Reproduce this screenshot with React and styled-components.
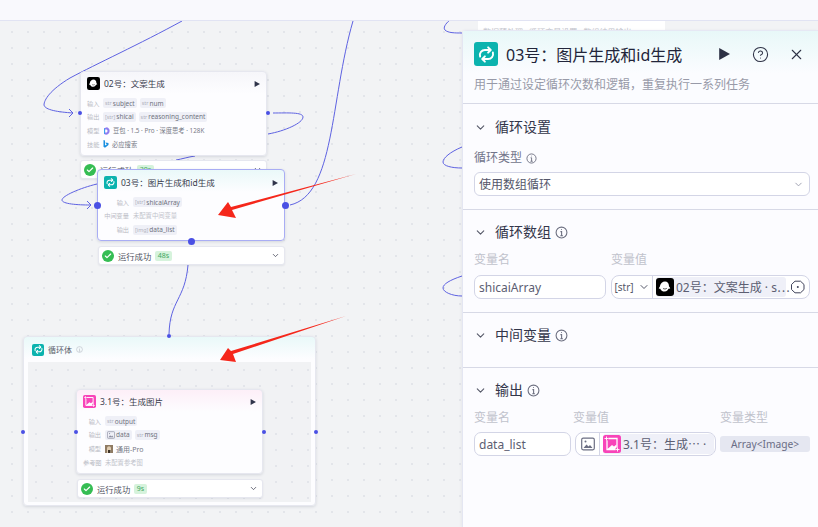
import React from "react";
import styled, { createGlobalStyle } from "styled-components";
import { ChevronDown, CircleHelp, X, Check } from "lucide-react";

const Global = createGlobalStyle`
  html, body { margin: 0; padding: 0; width: 818px; height: 527px; overflow: hidden; }
  body { font-family: "Noto Sans", "Noto Sans CJK SC", sans-serif; background: #f2f3f5; }
  * { box-sizing: border-box; }
`;
const Page = styled.div`width: 818px; height: 527px; display: flex; flex-direction: column;`;
const TopBar = styled.div`height: 21px; flex: none; background: #f9f9fd; border-bottom: 1px solid #e1e3f3;`;
const Canvas = styled.div`
  position: relative; flex: 1; overflow: hidden; background-color: #f2f3f5;
  background-image: radial-gradient(circle, #e3e5ea 0.8px, transparent 1px);
  background-size: 16px 16px; background-position: 4px 3px;
`;
const Wires = styled.svg`position: absolute; left: 0; top: 0; width: 818px; height: 506px; z-index: ${p => p.$z};`;
const Glyph = styled.svg`flex: none; display: block;`;
const Card = styled.div`
  position: absolute; left: ${p => p.$x}px; top: ${p => p.$y - 21}px; width: ${p => p.$w}px; height: ${p => p.$h}px;
  background: linear-gradient(180deg, ${p => p.$tint} 0, #fdfdff 22px);
  border-radius: 4px; z-index: ${p => p.$z || 1}; padding: ${p => (p.$active ? 6 : 5)}px 6px 0;
  border: ${p => (p.$active ? "1px solid #a9adf4" : "1px solid #e6e7ef")};
  box-shadow: 0 1px 3px rgba(30, 40, 80, 0.14);
`;
const CardHead = styled.div`display: flex; align-items: center; gap: 4px; height: 13px; margin-bottom: 7px;`;
const CardTitle = styled.div`flex: 1; font-size: 8.5px; line-height: 13px; color: #3a3d4d; white-space: nowrap;`;
const IconTile = styled.div`
  width: ${p => p.$s}px; height: ${p => p.$s}px; border-radius: ${p => p.$r || 2}px; background: ${p => p.$bg}; flex: none;
  display: flex; align-items: center; justify-content: center; color: #fff;
`;
const Rows = styled.div`display: flex; flex-direction: column; gap: 1.6px;`;
const Row = styled.div`display: flex; align-items: center; gap: 4px; height: 12.2px; white-space: nowrap;`;
const RowLabel = styled.span`width: ${p => p.$w}px; flex: none; text-align: right; font-size: 6.2px; color: #b9bbc4;`;
const Chip = styled.span`
  display: inline-flex; align-items: center; gap: 1px; height: 10px; padding: 0 2px; border-radius: 2px;
  background: #eff0f7; font-size: 6.5px; color: #70737f; margin-right: -1px;
`;
const ChipType = styled.span`color: #b1b3bf; font-size: 5.4px;`;
const Plain = styled.span`font-size: 6.3px; color: ${p => p.$muted ? "#c1c3cb" : "#777a86"}; display: inline-flex; align-items: center; gap: 3px;`;
const ModelName = styled(Plain)`font-size: 7px;`;
const Status = styled.div`
  position: absolute; left: ${p => p.$x}px; top: ${p => p.$y - 21}px; width: ${p => p.$w}px; height: 19px;
  background: #fff; border: 1px solid #e6e7ef; border-radius: 3px; z-index: ${p => p.$z || 1};
  display: flex; align-items: center; padding: 0 4px 0 3px; gap: 4px; box-shadow: 0 1px 2px rgba(30,40,80,.08);
`;
const StatusDot = styled.span`width: 12px; height: 12px; border-radius: 50%; background: #35bd53; color: #fff; display: flex; align-items: center; justify-content: center; flex: none;`;
const StatusText = styled.span`font-size: 8.3px; color: #50535f;`;
const Time = styled.span`font-size: 7px; height: 10px; line-height: 10px; padding: 0 2.5px; background: #d6f3dc; color: #42a860; border-radius: 2px; margin-right: auto;`;
const Handle = styled.span`
  position: absolute; left: ${p => p.$x - p.$s / 2}px; top: ${p => p.$y - 21 - p.$s / 2}px; width: ${p => p.$s}px; height: ${p => p.$s}px;
  border-radius: 50%; background: #4a50e4; z-index: 6;
`;
const Loop = styled(Card)`padding: 4px 8px;`;
const LoopBody = styled.div`
  position: absolute; left: 4px; right: 4px; top: 25px; bottom: 3px; background-color: #f1f2f4;
  background-image: radial-gradient(circle, #e3e5ea 0.8px, transparent 1px); background-size: 16px 16px;
`;
const LoopHead = styled.div`display: flex; align-items: center; gap: 4px; height: 13px; margin-top: 2px;`;
const LoopTitle = styled.span`font-size: 8px; color: #5b5e6c;`;
const BgNode = styled.div`
  position: absolute; left: 478px; top: -1px; width: 187px; height: 60px; background: #fff; z-index: 1;
  font-size: 8px; line-height: 24px; padding-left: 5px; color: #c5c6ce; white-space: nowrap;
`;

const Panel = styled.aside`
  position: absolute; left: 462px; top: 9px; width: 356px; height: 497px; z-index: 10;
  background: #fcfcff; border-left: 1px solid #e4e6f2; border-top: 1px solid #e6e8f4; border-top-left-radius: 5px;
  box-shadow: -1px 0 3px rgba(30, 40, 80, 0.05);
`;
const PanelHead = styled.header`
  height: 73px; padding: 11px 11px 0 11px; border-bottom: 1px solid #d7d9e6;
  background: linear-gradient(180deg, #e8f8f8 0, #fbfcff 42px);
`;
const PanelTop = styled.div`display: flex; align-items: center; height: 24px;`;
const PanelTitle = styled.h1`flex: 1; margin: 1px 0 0 8px; font-size: 16px; font-weight: 400; color: #22253a; line-height: 24px; white-space: nowrap;`;
const HeadActions = styled.div`display: flex; align-items: center; gap: 19px; color: #2d3145; margin-right: 2px;`;
const HeadPlay = styled.span`display: flex; margin-right: 3px;`;
const PanelDesc = styled.p`margin: 10px 0 0; font-size: 12px; line-height: 18px; color: #989aa8; white-space: nowrap;`;
const Section = styled.section`
  height: ${p => p.$h}px; padding: ${p => p.$pt}px 8px 0 11px; border-bottom: ${p => p.$last ? "none" : "1px solid #d7d9e6"};
`;
const SectionHead = styled.div`display: flex; align-items: center; height: 22px; color: #555868;`;
const SectionTitle = styled.h2`margin: 0 4px 0 8px; font-size: 14px; font-weight: 400; color: #33364a; line-height: 22px; white-space: nowrap;`;
const Field = styled.div`display: flex; align-items: center; font-size: 12px; color: #72748a; line-height: 18px; gap: 4px; margin-top: ${p => p.$mt || 0}px;`;
const Select = styled.div`
  height: 24px; margin-top: 5px; border: 1px solid #d3d5e6; border-radius: 6px; background: #fff;
  display: flex; align-items: center; justify-content: space-between; padding: 0 5px 0 4px; font-size: 12px; color: #54566a;
`;
const Labels = styled.div`display: flex; font-size: 12px; line-height: 18px; color: #c0c2cc; margin-top: ${p => p.$mt}px;`;
const LabelCol = styled.span`width: ${p => p.$w}px; flex: none;`;
const InputRow = styled.div`display: flex; align-items: center; gap: ${p => p.$g}px; margin-top: ${p => p.$mt}px;`;
const TextBox = styled.div`
  width: ${p => p.$w}px; height: 24px; border: 1px solid #d3d5e6; border-radius: 7px; background: #fff; flex: none;
  display: flex; align-items: center; padding: 0 4px; font-size: 12px; color: #5c5e72;
`;
const Ref = styled.div`
  width: ${p => p.$w}px; height: 24px; border: 1px solid #d3d5e6; border-radius: 8px; background: #fff; flex: none;
  display: flex; align-items: center; overflow: hidden;
`;
const RefType = styled.div`
  width: ${p => p.$w}px; height: 100%; flex: none; border-right: 1px solid #d3d5e6; display: flex; align-items: center; justify-content: center; gap: 4px;
  color: #555869; font-size: 10px;
`;
const RefChip = styled.div`
  flex: 1; min-width: 0; height: 20px; margin: 0 1px 0 3px; background: #eff0f8; border-radius: 3px;
  display: flex; align-items: center; gap: 2px; font-size: 12px; color: #5c5e72; white-space: nowrap;
`;
const TypeTag = styled.div`
  flex: none; width: 90px; height: 16px; border-radius: 3px; background: #e5e7f1; color: #6a6d85; font-size: 10.2px;
  display: flex; align-items: center; justify-content: center;
`;

const Info = ({ s = 11, c = "#6c6f80" }) => (
  <Glyph width={s} height={s} viewBox="0 0 12 12" fill="none" stroke={c}>
    <circle cx="6" cy="6" r="5" />
    <path d="M5 5.200h1.100V9M4.900 9h2.400" />
    <circle cx="6" cy="3.300" r=".5" fill={c} stroke="none" />
  </Glyph>
);
const Play = ({ s = 8, c = "#30344a" }) => (
  <Glyph width={s} height={s} viewBox="0 0 10 10"><path d="M1 0v10l9-5z" fill={c} /></Glyph>
);
const Ghost = ({ s }) => (
  <Glyph width={s} height={s} viewBox="0 0 18 18">
    <rect width="18" height="18" rx="3" fill="#000" />
    <path d="M9 3.400c2.500 0 3.900 1.900 3.900 4.200 0 .5.100.9.500 1.300.8.800 1 1.300.600 1.600-.5.200-1.100.100-1.500.200-.4.800-1.500 2.900-4 2.900-2 0-3.600-1.200-4.200-2.900-.5-.1-1-.1-1.400-.3-.3-.3.100-.8.700-1.500.3-.4.500-.8.500-1.300C4.600 5.300 6.500 3.400 9 3.400z" fill="#fff" />
    <path d="M7 10.300c.8.900 2.900.900 3.800 0" stroke="#444" strokeWidth=".9" fill="none" />
  </Glyph>
);
const ImgGen = ({ s }) => (
  <Glyph width={s} height={s} viewBox="0 0 18 18">
    <rect width="18" height="18" rx="2.500" fill="#f844b9" />
    <path d="M4 3.500h10v11H4z" fill="none" stroke="#fff" strokeWidth="1.300" />
    <path d="M4.500 14l4.500-4 2 1.500 2.500-2V14z" fill="#fff" />
    <path d="M3.500 1.500v4M1.500 3.500h4M14.500 12.500v4M12.500 14.500h4" stroke="#f844b9" strokeWidth="2.400" />
    <path d="M3.500 1.500v4M1.500 3.500h4M14.500 12.500v4M12.500 14.500h4" stroke="#fff" strokeWidth=".9" />
  </Glyph>
);
const Doubao = () => (
  <Glyph width="7" height="8" viewBox="0 0 7 8"><path d="M1 1.200l3-1c2 .8 2.800 2.200 2.600 4C6.400 6.300 4.800 7.600 3 7.800L1 7z" fill="#8f7cf0" /><path d="M2.200 2.500h1.500c1 .4 1.200 2.400 0 3H2.200z" fill="#fff" /><path d="M1 1.200v5.800l1-.4V1.800z" fill="#3aa3f0" /></Glyph>
);
const Bing = () => (
  <Glyph width="6" height="8" viewBox="0 0 6 8"><path d="M.500 0l1.500.5v5l2-1.200-1-.5-.6-1.400L5.500 3v2L2 7.800.500 6.800z" fill="#1a8fe0" /></Glyph>
);
const ImgType = ({ s = 8, c = "#8a8da0" }) => (
  <Glyph width={s} height={s} viewBox="0 0 14 14" fill="none"><rect x=".7" y="1.200" width="12.600" height="11.600" rx="1.500" stroke={c} strokeWidth="1.200" /><path d="M2.500 11l3-3.500 2 2L9 8l2.500 3z" fill={c} /><circle cx="4.500" cy="4.500" r="1" fill={c} /></Glyph>
);
const Portrait = () => (
  <Glyph width="8" height="8" viewBox="0 0 8 8"><rect width="8" height="8" fill="#8f7b63" /><path d="M2 8V3.500C2 2 3 1.300 4 1.300s2 .7 2 2.200V8z" fill="#e0cdb2" /><path d="M3 8V5h2.500v3z" fill="#3f3429" /></Glyph>
);
const LoopGlyph = ({ s }) => (
  <Glyph width={s} height={s} viewBox="0 0 16 16" fill="none" stroke="#fff" strokeWidth="1.800" strokeLinecap="round" strokeLinejoin="round">
    <path d="M2 10C1 6.500 3.500 3.800 6.500 3.800H11.500" />
    <path d="M9.500 1.300L12 3.800 9.500 6.300" />
    <path d="M14 6C15 9.500 12.500 12.200 9.500 12.200H4.500" />
    <path d="M6.500 9.700L4 12.200 6.500 14.700" />
  </Glyph>
);

const StatusBar = ({ x, y, w, z, time }) => (
  <Status $x={x} $y={y} $w={w} $z={z}>
    <StatusDot><Check size={8} strokeWidth={3.500} /></StatusDot>
    <StatusText>运行成功</StatusText>
    <Time>{time}</Time>
    <ChevronDown size={9} color="#3d4052" />
  </Status>
);

const CardRow = ({ label, w, children }) => (
  <Row><RowLabel $w={w}>{label}</RowLabel>{children}</Row>
);

export default function App() {
  return (
    <Page>
      <Global />
      <TopBar />
      <Canvas>
        <Wires $z={0} viewBox="0 21 818 506" fill="none" stroke="#5e62e2" strokeWidth="1">
          <path d="M182 21C140 44 96 64 70 78C50 90 44 100 44 105C45 110 58 112 73 113" />
          <path d="M69 109l4 4-4 4" />
          <path d="M273 113C288 113 303 112 303 117C303 123 285 131 268 134" />
          <path d="M195 156C188 157 182 159 176 160" />
          <path d="M97 184C80 188 62 196 62 200C62 204 78 205 90 205" />
          <path d="M87 201l4 4-4 4" />
          <path d="M290 205C335 195 330 100 353 21" />
          <path d="M188 265C185 300 170 300 169 334" />
          <path d="M450 20C445 24 443 28 445 30C448 33 455 33 462 33" />
          <path d="M462 147C450 152 443 158 443 162C443 166 452 168 462 168" />
          <path d="M462 276C450 280 443 284 443 288C443 292 452 296 462 296" />
          <path d="M28 432H70M67 428.500l4 3.500-4 3.500" />
          <path d="M269 432H311M308 428.500l4 3.500-4 3.500" />
        </Wires>
        <BgNode>数据预处理 · 循环变量设置 · 数组结果输出</BgNode>

        <Card $x={80} $y={71} $w={187} $h={85} $tint="#f6f6fa" $z={2}>
          <CardHead>
            <Ghost s={13} />
            <CardTitle>02号：文案生成</CardTitle>
            <Play s={6} />
          </CardHead>
          <Rows>
            <CardRow label="输入" w={12}><Chip><ChipType>str</ChipType> subject</Chip><Chip><ChipType>str</ChipType> num</Chip></CardRow>
            <CardRow label="输出" w={12}><Chip><ChipType>[str]</ChipType> shicai</Chip><Chip><ChipType>str</ChipType> reasoning_content</Chip></CardRow>
            <CardRow label="模型" w={12}><Plain><Doubao />豆包 · 1.5 · Pro · 深度思考 · 128K</Plain></CardRow>
            <CardRow label="技能" w={12}><Plain><Bing />必应搜索</Plain></CardRow>
          </Rows>
        </Card>
        <StatusBar x={80} y={160} w={187} z={2} time="30s" />

        <Card $x={97} $y={169} $w={188} $h={72} $tint="#eaf9f9" $z={3} $active>
          <CardHead>
            <IconTile $s={13} $bg="#0bb3ae"><LoopGlyph s={9} /></IconTile>
            <CardTitle>03号：图片生成和id生成</CardTitle>
            <Play s={6} />
          </CardHead>
          <Rows>
            <CardRow label="输入" w={25}><Chip><ChipType>[str]</ChipType> shicaiArray</Chip></CardRow>
            <CardRow label="中间变量" w={25}><Plain $muted>未配置中间变量</Plain></CardRow>
            <CardRow label="输出" w={25}><Chip><ChipType>[img]</ChipType> data_list</Chip></CardRow>
          </Rows>
        </Card>
        <StatusBar x={98} y={246} w={187} z={3} time="48s" />

        <Loop $x={23} $y={336} $w={293} $h={170} $tint="#e9f9f9" $z={2}>
          <LoopHead>
            <IconTile $s={12} $bg="#0bb3ae"><LoopGlyph s={9} /></IconTile>
            <LoopTitle>循环体</LoopTitle>
            <Info s={7} c="#b9bbc6" />
          </LoopHead>
          <LoopBody />
        </Loop>

        <Card $x={76} $y={389} $w={187} $h={85} $tint="#fdeff8" $z={3}>
          <CardHead>
            <ImgGen s={13} />
            <CardTitle>3.1号：生成图片</CardTitle>
            <Play s={6} />
          </CardHead>
          <Rows>
            <CardRow label="输入" w={18}><Chip><ChipType>str</ChipType> output</Chip></CardRow>
            <CardRow label="输出" w={18}><Chip><ImgType />data</Chip><Chip><ChipType>str</ChipType> msg</Chip></CardRow>
            <CardRow label="模型" w={18}><ModelName><Portrait />通用-Pro</ModelName></CardRow>
            <CardRow label="参考图" w={18}><Plain $muted>未配置参考图</Plain></CardRow>
          </Rows>
        </Card>
        <StatusBar x={77} y={479} w={186} z={3} time="9s" />

        <Handle $x={80} $y={113} $s={4} />
        <Handle $x={268} $y={113} $s={4} />
        <Handle $x={97} $y={205} $s={7} />
        <Handle $x={285} $y={205} $s={7} />
        <Handle $x={191} $y={241} $s={7} />
        <Handle $x={169} $y={336} $s={4.500} />
        <Handle $x={23} $y={432} $s={4.500} />
        <Handle $x={76} $y={432} $s={4.500} />
        <Handle $x={264} $y={432} $s={4.500} />
        <Handle $x={316} $y={432} $s={4.500} />

        <Wires $z={8} viewBox="0 21 818 506">
          <path d="M356 174L232 210L236 218L218 215L228 202L231 207Z" fill="#f5271b" />
          <path d="M346 316L233 354L236 362L220 360L228 348L231 351Z" fill="#f5271b" />
        </Wires>

        <Panel>
          <PanelHead>
            <PanelTop>
              <IconTile $s={24} $r={3} $bg="#0bb3ae"><LoopGlyph s={17} /></IconTile>
              <PanelTitle>03号：图片生成和id生成</PanelTitle>
              <HeadActions>
                <HeadPlay><Play s={12} c="#2d3145" /></HeadPlay>
                <CircleHelp size={17} strokeWidth={1.500} />
                <X size={17} strokeWidth={1.500} />
              </HeadActions>
            </PanelTop>
            <PanelDesc>用于通过设定循环次数和逻辑，重复执行一系列任务</PanelDesc>
          </PanelHead>

          <Section $h={106} $pt={12}>
            <SectionHead>
              <ChevronDown size={13} />
              <SectionTitle>循环设置</SectionTitle>
            </SectionHead>
            <Field $mt={11}>循环类型 <Info /></Field>
            <Select>使用数组循环<ChevronDown size={11} color="#9a9cad" /></Select>
          </Section>

          <Section $h={103} $pt={11}>
            <SectionHead>
              <ChevronDown size={13} />
              <SectionTitle>循环数组</SectionTitle>
              <Info s={13} />
            </SectionHead>
            <Labels $mt={8}><LabelCol $w={137}>变量名</LabelCol><LabelCol $w={100}>变量值</LabelCol></Labels>
            <InputRow $g={5} $mt={6}>
              <TextBox $w={132}>shicaiArray</TextBox>
              <Ref $w={199}>
                <RefType $w={41}>[str]<ChevronDown size={12} /></RefType>
                <RefChip><Ghost s={18} />02号：文案生成 · s⋯</RefChip>
                <Glyph width="22" height="16" viewBox="0 0 22 16" fill="none" stroke="#40435a">
                  <path d="M8 2.200h5.500l3.500 3.300v5l-3.500 3.300H8L4.500 10.500v-5z" strokeWidth="1" />
                  <circle cx="10.800" cy="8" r="1" fill="#40435a" stroke="none" />
                </Glyph>
              </Ref>
            </InputRow>
          </Section>

          <Section $h={55} $pt={11}>
            <SectionHead>
              <ChevronDown size={13} />
              <SectionTitle>中间变量</SectionTitle>
              <Info s={13} />
            </SectionHead>
          </Section>

          <Section $h={160} $pt={11} $last>
            <SectionHead>
              <ChevronDown size={13} />
              <SectionTitle>输出</SectionTitle>
              <Info s={13} />
            </SectionHead>
            <Labels $mt={8}><LabelCol $w={99}>变量名</LabelCol><LabelCol $w={147}>变量值</LabelCol><LabelCol $w={90}>变量类型</LabelCol></Labels>
            <InputRow $g={4} $mt={5}>
              <TextBox $w={97}>data_list</TextBox>
              <Ref $w={141}>
                <RefType $w={24}><ImgType s={14} c="#6b6e82" /></RefType>
                <RefChip><ImgGen s={18} />3.1号：生成⋯ ·</RefChip>
              </Ref>
              <TypeTag>Array&lt;Image&gt;</TypeTag>
            </InputRow>
          </Section>
        </Panel>
      </Canvas>
    </Page>
  );
}
